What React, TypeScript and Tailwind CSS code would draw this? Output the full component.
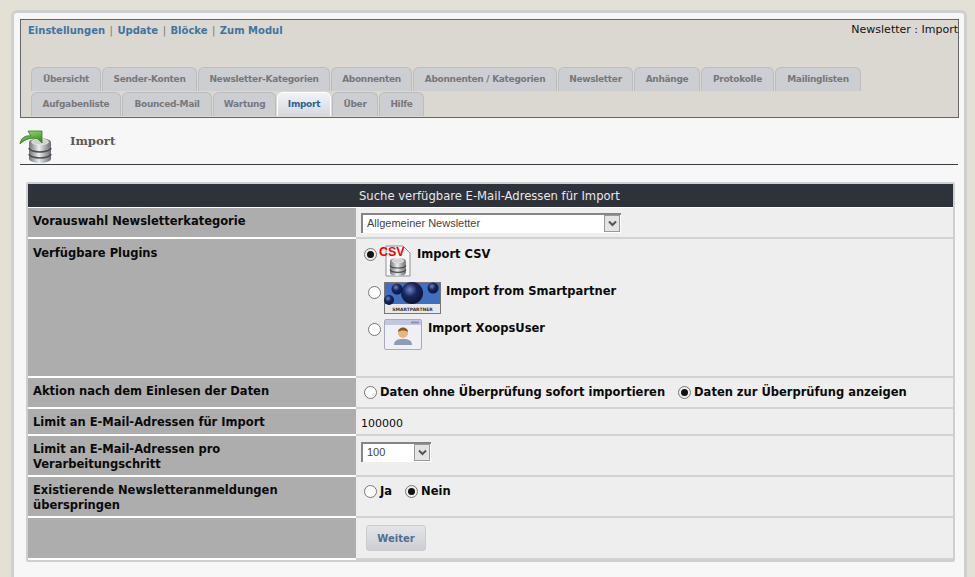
const topTabs = [
  ["Übersicht", "w-[70px]"],
  ["Sender-Konten", "w-[95px]"],
  ["Newsletter-Kategorien", "w-[132px]"],
  ["Abonnenten", "w-[81px]"],
  ["Abonnenten / Kategorien", "w-[144px]"],
  ["Newsletter", "w-[75px]"],
  ["Anhänge", "w-[66px]"],
  ["Protokolle", "w-[73px]"],
  ["Mailinglisten", "w-[86px]"],
];

const bottomTabs = [
  ["Aufgabenliste", "w-[90px]"],
  ["Bounced-Mail", "w-[90px]"],
  ["Wartung", "w-[63px]"],
  ["Import", "w-[54px]"],
  ["Über", "w-[46px]"],
  ["Hilfe", "w-[45px]"],
];

const Tab = ({ label, width }: { label: string; width: string }) => {
  const active = label === "Import";
  return (
    <div
      className={`flex h-6 items-center justify-center rounded-t-[6px] border border-b-0 pt-[1px] text-[9px] font-bold tracking-[-0.3px] ${width} ${
        active
          ? "border-white bg-gradient-to-b from-[#f2f3f5] to-[#d5d8de] text-[#2a6496]"
          : "border-[#bdbdbd] bg-[#cdced2] text-[#77787c]"
      }`}
    >
      {label}
    </div>
  );
};

const Radio = ({ checked, className }: { checked?: boolean; className?: string }) => (
  <span
    className={`flex size-[13px] shrink-0 items-center justify-center rounded-full border border-[#777] ${
      checked ? "bg-[#eeeeee]" : "bg-white"
    } ${className ?? ""}`}
  >
    {checked && <span className="size-[7px] rounded-full bg-[#111]" />}
  </span>
);

const FakeSelect = ({ label, width }: { label: string; width: string }) => (
  <div
    className={`flex h-[20px] items-stretch border-t-2 border-l-2 border-t-[#858585] border-l-[#858585] bg-white ${width}`}
  >
    <span className="flex-1 pl-1 font-['Liberation_Sans',sans-serif] text-[11px] leading-[17px] font-normal text-[#444]">
      {label}
    </span>
    <span className="mr-[1px] mb-[1px] flex w-4 items-center justify-center border border-[#999] bg-[#e4e4e4]">
      <svg width="9" height="7" viewBox="0 0 9 7">
        <path d="M1 1.5 L4.5 5 L8 1.5" fill="none" stroke="#555" strokeWidth="2" />
      </svg>
    </span>
  </div>
);

const DatabaseStack = () => (
  <>
    <defs>
      <linearGradient id="cyl" x1="0" x2="1" y1="0" y2="0">
        <stop offset="0" stopColor="#6f7174" />
        <stop offset="0.45" stopColor="#eceded" />
        <stop offset="1" stopColor="#6a6c6f" />
      </linearGradient>
    </defs>
    <path d="M0 4 a11 4 0 0 1 22 0 v17 a11 4 0 0 1 -22 0 Z" fill="url(#cyl)" />
    <ellipse cx="11" cy="4" rx="8.5" ry="2.8" fill="#cfd0d1" stroke="#f2f2f2" strokeWidth="0.6" />
    <path d="M0 10 a11 4 0 0 0 22 0 M0 16 a11 4 0 0 0 22 0" fill="none" stroke="#4c4e51" strokeWidth="1.5" />
  </>
);

const PageIcon = () => (
  <svg width="34" height="34" viewBox="0 0 34 34" className="-ml-px mt-px shrink-0">
    <defs>
      <linearGradient id="arrow" x1="0" x2="0.4" y1="0" y2="1">
        <stop offset="0" stopColor="#a6dc7c" />
        <stop offset="1" stopColor="#2f8f1c" />
      </linearGradient>
    </defs>
    <g transform="translate(10 8)">
      <DatabaseStack />
    </g>
    <path
      d="M1 14 C2 8 6 5 12 6 L9 1 H23 V13 L19 9 C13 7 6 9 1 14 Z"
      fill="url(#arrow)"
      stroke="#2f7d1d"
      strokeWidth="0.8"
    />
  </svg>
);

const CsvIcon = () => (
  <span className="relative ml-[8px] h-[32px] w-[26px] shrink-0">
    <svg width="26" height="32" viewBox="0 0 26 32" className="absolute top-0 left-0">
      <path d="M1 1 H18 L25 8 V31 H1 Z" fill="#f8f8f8" stroke="#8f8f8f" />
      <g transform="translate(5 13) scale(0.72)">
        <DatabaseStack />
      </g>
    </svg>
    <span className="absolute top-[1px] left-[-6px] font-['Liberation_Sans',sans-serif] text-[12.5px] leading-none font-bold text-[#f00000]">
      CSV
    </span>
  </span>
);

const SmartpartnerIcon = () => (
  <svg width="57" height="32" viewBox="0 0 57 32" className="shrink-0">
    <defs>
      <radialGradient id="orb" cx="0.4" cy="0.35" r="0.7">
        <stop offset="0" stopColor="#6f86c4" />
        <stop offset="0.45" stopColor="#16265f" />
        <stop offset="1" stopColor="#0b1233" />
      </radialGradient>
    </defs>
    <rect x="0.5" y="0.5" width="56" height="31" fill="#e9e9e9" stroke="#777" />
    <rect x="1" y="1" width="55" height="21" fill="#3f6fc0" />
    <circle cx="28" cy="11" r="11" fill="url(#orb)" />
    <circle cx="13" cy="7" r="5.5" fill="url(#orb)" />
    <circle cx="49" cy="6" r="5.5" fill="url(#orb)" />
    <circle cx="5" cy="18" r="5" fill="url(#orb)" />
    <text x="28.5" y="29" textAnchor="middle" fontSize="4.5" fontWeight="700" fill="#333">
      SMARTPARTNER
    </text>
  </svg>
);

const UserIcon = () => (
  <svg width="38" height="31" viewBox="0 0 38 31" className="shrink-0">
    <rect x="0.5" y="0.5" width="37" height="30" rx="1.5" fill="#eef0f6" stroke="#a9a9c4" />
    <rect x="1" y="1" width="36" height="5" fill="#c4c6e0" />
    <rect x="27" y="2.5" width="8" height="2" fill="#8d90b5" />
    <path d="M10 26 C10 21 14 20 19 20 C24 20 28 21 28 26 Z" fill="#8f9ab8" />
    <circle cx="19" cy="14" r="5" fill="#e9b777" />
    <path d="M14 13 C14 7 24 7 24 13 C21 11 17 11 14 13 Z" fill="#8a5a1d" />
  </svg>
);

const Row = ({
  height,
  label,
  labelTop = "pt-[6px]",
  children,
}: {
  height: string;
  label?: string;
  labelTop?: string;
  children: React.ReactNode;
}) => (
  <div className={`flex ${height}`}>
    <div
      className={`w-[328px] shrink-0 border-b-2 border-white bg-[#adadad] px-[5px] text-[11.5px] leading-[15px] font-bold text-[#0a0a0a] ${labelTop}`}
    >
      {label}
    </div>
    <div className="flex-1 border-b-2 border-[#d2d2d2] bg-[#eeeeee] pl-[5px] text-[11.5px] font-bold text-[#0a0a0a]">
      {children}
    </div>
  </div>
);

export default function App() {
  return (
    <div className="h-[577px] overflow-hidden bg-[#e3e1d6] pt-[10px] pr-2 pl-[11px] font-['DejaVu_Sans',Verdana,sans-serif]">
      <div className="h-[600px] rounded-t-[6px] border-[3px] border-[#cfcfcf] bg-[#f7f7f7] pt-[6px] pr-[5px] pl-[6px]">
        <div className="flex h-[99px] flex-col border border-[#666] bg-[#dbd8d1]">
          <div className="flex items-start justify-between pt-[3px] pl-[7px]">
            <div className="text-[10px] font-bold text-[#3f74a3]">
              Einstellungen <span className="mx-[1px] font-normal text-[#777]">|</span> Update{" "}
              <span className="mx-[1px] font-normal text-[#777]">|</span> Blöcke{" "}
              <span className="mx-[1px] font-normal text-[#777]">|</span> Zum Modul
            </div>
            <div className="text-[11px] leading-[14px] text-[#111]">Newsletter : Import</div>
          </div>
          <div className="mt-[29px] flex flex-col gap-px pl-[10px]">
            <div className="flex gap-px">
              {topTabs.map(([label, width]) => (
                <Tab key={label} label={label} width={width} />
              ))}
            </div>
            <div className="flex gap-px">
              {bottomTabs.map(([label, width]) => (
                <Tab key={label} label={label} width={width} />
              ))}
            </div>
          </div>
        </div>

        <div className="mt-[11px] mr-[1px] flex h-[36px] gap-[17px] border-b border-[#3a3f45]">
          <PageIcon />
          <div className="pt-[4px] font-['DejaVu_Serif',serif] text-[11.7px] font-bold text-[#5a5a5a]">
            Import
          </div>
        </div>

        <div className="mt-[17px] mr-[4px] ml-[6px] rounded-[2px] border-2 border-[#cfcfcf]">
          <div className="flex h-[24px] items-center border-b border-white bg-[#2e323b] pt-[2px] pl-[331px] text-[11.6px] whitespace-nowrap text-[#e8e8e8]">
            Suche verfügbare E-Mail-Adressen für Import
          </div>
          <Row height="h-[31px]" label="Vorauswahl Newsletterkategorie">
            <div className="pt-[5px]">
              <FakeSelect label="Allgemeiner Newsletter" width="w-[260px]" />
            </div>
          </Row>
          <Row height="h-[139px]" label="Verfügbare Plugins" labelTop="pt-[7px]">
            <div className="flex items-start pt-[6px] pl-[3px]">
              <Radio checked className="mt-[3px]" />
              <CsvIcon />
              <span className="pt-[1px] pl-[6px]">Import CSV</span>
            </div>
            <div className="flex items-start pt-[5px] pl-[7px]">
              <Radio className="mt-[4px]" />
              <span className="w-[3px]" />
              <SmartpartnerIcon />
              <span className="pt-[1px] pl-[5px]">Import from Smartpartner</span>
            </div>
            <div className="flex items-start pt-[5px] pl-[7px]">
              <Radio className="mt-[4px]" />
              <span className="w-[3px]" />
              <UserIcon />
              <span className="pt-[1px] pl-[6px]">Import XoopsUser</span>
            </div>
          </Row>
          <Row height="h-[31px]" label="Aktion nach dem Einlesen der Daten">
            <div className="flex items-center pt-[6px] pl-[3px]">
              <Radio />
              <span className="pl-[3px]">Daten ohne Überprüfung sofort importieren</span>
              <Radio checked className="ml-[13px]" />
              <span className="pl-[3px]">Daten zur Überprüfung anzeigen</span>
            </div>
          </Row>
          <Row height="h-[27px]" label="Limit an E-Mail-Adressen für Import">
            <div className="pt-[7px] text-[11px] font-normal">100000</div>
          </Row>
          <Row height="h-[41px]" label="Limit an E-Mail-Adressen pro Verarbeitungschritt">
            <div className="pt-[6px]">
              <FakeSelect label="100" width="w-[70px]" />
            </div>
          </Row>
          <Row height="h-[41px]" label="Existierende Newsletteranmeldungen überspringen">
            <div className="flex items-center pt-[6px] pl-[3px]">
              <Radio />
              <span className="pl-[3px]">Ja</span>
              <Radio checked className="ml-[13px]" />
              <span className="pl-[3px]">Nein</span>
            </div>
          </Row>
          <Row height="h-[42px]">
            <div className="pt-[7px] pl-[5px]">
              <button className="h-[26px] w-[60px] rounded-[3px] border border-[#ccc] bg-gradient-to-b from-[#e4e5e9] to-[#ccced3] text-[10px] font-bold text-[#4f6f94]">
                Weiter
              </button>
            </div>
          </Row>
        </div>
      </div>
    </div>
  );
}
